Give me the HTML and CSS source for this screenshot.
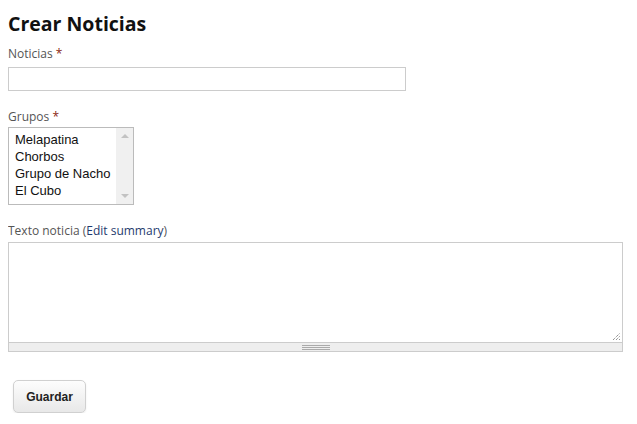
FILE: index.html
```html
<!DOCTYPE html>
<html lang="es">
<head>
  <meta charset="UTF-8" />
  <title>Crear Noticias</title>
  <link rel="stylesheet" href="styles.css">
</head>
<body>
  <h1 class="page-title">Crear Noticias</h1>

  <form class="node-form">
    <div class="form-item form-item-title">
      <label class="form-label">Noticias <span class="req">*</span></label>
      <div class="text-input"></div>
    </div>

    <div class="form-item form-item-groups">
      <label class="form-label">Grupos <span class="req">*</span></label>
      <div class="multi-select">
        <ul class="options">
          <li>Melapatina</li>
          <li>Chorbos</li>
          <li>Grupo de Nacho</li>
          <li>El Cubo</li>
        </ul>
        <div class="scrollbar">
          <span class="arrow up"></span>
          <span class="arrow down"></span>
        </div>
      </div>
    </div>

    <div class="form-item form-item-body">
      <label class="form-label">Texto noticia <span class="summary">(<a href="#">Edit summary</a>)</span></label>
      <div class="textarea">
        <svg class="resize" width="8" height="8" viewBox="0 0 8 8">
          <path d="M1 8 L8 1 M4 8 L8 4 M7 8 L8 7" stroke="#666" stroke-width="1" stroke-dasharray="1 1"/>
        </svg>
      </div>
      <div class="grippie"><span class="grip"></span></div>
    </div>

    <div class="actions">
      <button type="button" class="btn">Guardar</button>
    </div>
  </form>
</body>
</html>
```

FILE: styles.css
```css
* {
  box-sizing: border-box;
}

body {
  margin: 8px;
  font-family: 'Open Sans', sans-serif;
  color: #333;
  background: #fff;
}

.page-title {
  font-size: 19.5px;
  font-weight: 700;
  color: #111;
  margin: 3px 0 8px;
  line-height: 26px;
}

.form-item {
  margin-bottom: 14px;
}
.form-item-title {
  margin-bottom: 17px;
}
.form-item-groups {
  margin-bottom: 17px;
}
.form-item-groups .form-label {
  margin-bottom: 2px;
}
.form-item-body .form-label {
  margin-bottom: 3px;
}

.form-label {
  display: block;
  font-size: 12px;
  line-height: 17px;
  color: #555;
  margin-bottom: 5px;
}
.req {
  color: #8a1f11;
}
.summary a {
  color: #1f3a6e;
  text-decoration: none;
}

.text-input {
  width: 398px;
  height: 24px;
  border: 1px solid #ccc;
  background: #fff;
}

/* listbox */
.multi-select {
  display: flex;
  width: 126px;
  height: 78px;
  border: 1px solid #bbb;
}
.options {
  list-style: none;
  margin: 0;
  padding: 3px 0 0 6px;
  flex: 1;
  font-family: Arial, 'Liberation Sans', sans-serif;
  font-size: 13px;
  line-height: 17px;
  color: #111;
}
.scrollbar {
  width: 17px;
  background: #f0f0f0;
  display: flex;
  flex-direction: column;
  justify-content: space-between;
  align-items: center;
  padding: 6px 0;
}
.arrow {
  width: 0;
  height: 0;
  border-left: 4px solid transparent;
  border-right: 4px solid transparent;
}
.arrow.up {
  border-bottom: 4px solid #c2c2c2;
}
.arrow.down {
  border-top: 4px solid #c2c2c2;
}

/* body textarea */
.textarea {
  position: relative;
  width: 615px;
  height: 100px;
  border: 1px solid #ccc;
  border-bottom: none;
  background: #fff;
}
.resize {
  position: absolute;
  right: 2px;
  bottom: 2px;
}
.grippie {
  width: 615px;
  height: 10px;
  background: #eee;
  border: 1px solid #ccc;
  display: flex;
  justify-content: center;
  align-items: center;
}
.grip {
  width: 28px;
  height: 5px;
  border-top: 1px solid #aaa;
  border-bottom: 1px solid #aaa;
  background: linear-gradient(#eee 1px, #aaa 1px, #aaa 2px, #eee 2px);
}

.actions {
  padding: 14px 0 0 5px;
}
.btn {
  width: 73px;
  height: 33px;
  border: 1px solid #d0d0d0;
  border-radius: 5px;
  background: linear-gradient(#fdfdfd, #e8e8e8);
  box-shadow: 0 1px 2px rgba(0,0,0,0.08);
  font-family: Arial, 'Liberation Sans', sans-serif;
  font-size: 12px;
  font-weight: 700;
  color: #222;
  padding: 0;
}
```
